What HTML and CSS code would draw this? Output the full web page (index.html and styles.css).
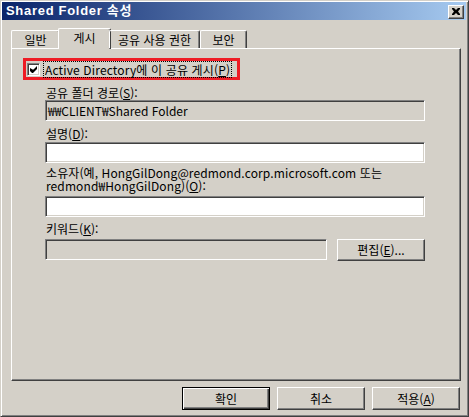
FILE: index.html
```html
<!DOCTYPE html>
<html lang="ko">
<head>
<meta charset="utf-8">
<title>Shared Folder 속성</title>
<link rel="stylesheet" href="styles.css">
</head>
<body>
<div class="window">
  <div class="titlebar">
    <span class="title">Shared Folder 속성</span>
    <span class="close">
      <svg width="8" height="7" viewBox="0 0 8 7"><path d="M0 0h2l2 2 2-2h2v1l-2 2.5 2 2.5v1h-2l-2-2-2 2h-2v-1l2-2.5-2-2.5z" fill="#000"/></svg>
    </span>
  </div>
  <div class="tabs">
    <div class="tab t1">일반</div>
    <div class="tab t2 active">게시</div>
    <div class="tab t3">공유 사용 권한</div>
    <div class="tab t4">보안</div>
  </div>
  <div class="panel">
    <div class="highlight">
      <span class="checkbox">
        <svg width="7" height="7" viewBox="0 0 7 7"><path d="M0 2v3l2 2h1l4-4v-3l-3.5 3.5h-1z" fill="#000"/></svg>
      </span>
      <span class="focus">Active Directory에 이 공유 게시(<u>P</u>)</span>
    </div>
    <div class="label l1">공유 폴더 경로(<u>S</u>):</div>
    <div class="field ro">₩₩CLIENT₩Shared Folder</div>
    <div class="label l2">설명(<u>D</u>):</div>
    <div class="field edit f2"></div>
    <div class="label l3">소유자(예, HongGilDong@redmond.corp.microsoft.com 또는<br>redmond₩HongGilDong)(<u>O</u>):</div>
    <div class="field edit f3"></div>
    <div class="label l4">키워드(<u>K</u>):</div>
    <div class="row">
      <div class="field ro short"></div>
      <div class="btn edit-btn">편집(<u>E</u>)...</div>
    </div>
  </div>
  <div class="buttons">
    <div class="btn default"><span>확인</span></div>
    <div class="btn">취소</div>
    <div class="btn">적용(<u>A</u>)</div>
  </div>
</div>
</body>
</html>
```

FILE: styles.css
```css
html, body {
  margin: 0;
  padding: 0;
  background: #d4d0c8;
}
body {
  font-family: "Noto Sans CJK KR", "Liberation Sans", sans-serif;
  font-size: 12px;
  color: #000;
}
u { text-decoration: underline; text-underline-offset: 1px; }

.window {
  width: 469px;
  height: 417px;
  box-sizing: border-box;
  border: 1px solid;
  border-color: #d4d0c8 #404040 #404040 #d4d0c8;
  box-shadow: inset 1px 1px #fff, inset -1px -1px #808080;
  padding: 1px 2px 0 1px;
  display: flex;
  flex-direction: column;
}

.titlebar {
  height: 18px;
  background: linear-gradient(to right, #0a246a, #a6caf0);
  display: flex;
  align-items: center;
  justify-content: space-between;
  padding: 0 2px 0 4px;
}
.title {
  color: #fff;
  font-family: "Liberation Sans", "Noto Sans CJK KR", sans-serif;
  font-weight: bold;
  font-size: 13px;
  letter-spacing: 0.7px;
  line-height: 18px;
}
.close {
  width: 14px;
  height: 12px;
  background: #d4d0c8;
  border: 1px solid;
  border-color: #fff #404040 #404040 #fff;
  box-shadow: inset -1px -1px #808080;
  display: flex;
  align-items: center;
  justify-content: center;
  margin-top: 1px;
}

.tabs {
  display: flex;
  align-items: flex-end;
  height: 20px;
  margin-top: 8px;
  padding-left: 9px;
  position: relative;
  z-index: 1;
}
.tab {
  height: 18px;
  box-sizing: border-box;
  border-top: 1px solid #fff;
  border-left: 1px solid #fff;
  border-right: 1px solid #404040;
  box-shadow: inset -1px 0 #808080;
  border-radius: 2px 2px 0 0;
  text-align: center;
  line-height: 16px;
  padding-top: 1px;
}
.t1 { width: 49px; }
.t2 { width: 51px; }
.t3 { width: 91px; }
.t4 { width: 47px; }
.tab.active {
  height: 21px;
  margin: 0 -2px -1px -2px;
  width: 53px;
  background: #d4d0c8;
  line-height: 17px;
  padding-top: 0;
}

.panel {
  margin-left: 9px;
  width: 450px;
  height: 333px;
  box-sizing: border-box;
  border: 1px solid;
  border-color: #fff #404040 #404040 #fff;
  box-shadow: inset -1px -1px #808080;
  padding: 9px 0 0 33px;
  display: flex;
  flex-direction: column;
  align-items: flex-start;
}

.highlight {
  margin-left: -22px;
  width: 217px;
  height: 22px;
  box-sizing: border-box;
  border: 3px solid #ee1c25;
  display: flex;
  align-items: center;
  padding-left: 1px;
}
.checkbox {
  width: 13px;
  height: 13px;
  box-sizing: border-box;
  background: #fff;
  border: 1px solid;
  border-color: #808080 #fff #fff #808080;
  box-shadow: inset 1px 1px #404040, inset -1px -1px #d4d0c8;
  display: flex;
  align-items: center;
  justify-content: center;
}
.focus {
  margin-left: 4px;
  outline: 1px dotted #000;
  outline-offset: 0;
  line-height: 15px;
  padding: 0 1px;
  white-space: nowrap;
  letter-spacing: 0.15px;
}

.label {
  line-height: 13px;
  padding-left: 1px;
  white-space: nowrap;
}
.l1 { margin-top: 6px; }
.l2 { margin-top: 6px; }
.l3 { margin-top: 3px; line-height: 13px; letter-spacing: 0.1px; }
.l4 { margin-top: 5px; }

.field {
  width: 380px;
  height: 21px;
  box-sizing: border-box;
  border: 1px solid;
  border-color: #808080 #fff #fff #808080;
  box-shadow: inset 1px 1px #404040, inset -1px -1px #d4d0c8;
  padding-left: 2px;
  line-height: 19px;
  white-space: nowrap;
}
.l1 + .field { margin-top: 1px; }
.ro { background: #d4d0c8; }
.edit { background: #fff; }
.f2 { margin-top: 2px; }
.f3 { margin-top: 4px; }

.row {
  margin-top: 4px;
  display: flex;
  gap: 10px;
  align-items: flex-start;
}
.short { width: 282px; }

.btn {
  width: 88px;
  height: 23px;
  box-sizing: border-box;
  border: 1px solid;
  border-color: #fff #404040 #404040 #fff;
  box-shadow: inset -1px -1px #808080;
  display: flex;
  align-items: center;
  justify-content: center;
  line-height: 14px;
}
.edit-btn { height: 22px; }

.buttons {
  display: flex;
  justify-content: flex-end;
  gap: 7px;
  padding-right: 6px;
  margin-top: 6px;
}
.btn.default {
  border: 1px solid #000;
  box-shadow: inset 1px 1px #fff, inset -1px -1px #404040, inset -2px -2px #808080;
}
```
